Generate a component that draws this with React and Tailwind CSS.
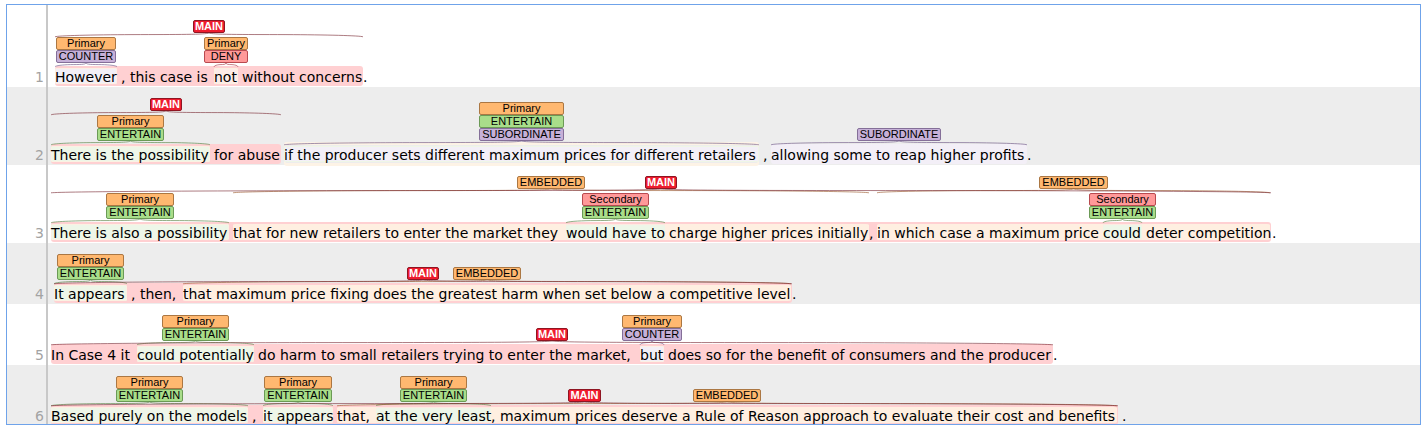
import React from "react";
import clsx from "clsx";

const TAGS = {
  MAIN: "bg-[#ee1c2e] border-[#8f1522] px-px text-white font-bold",
  Primary: "bg-[#ffb870] border-[#ab7743] px-[2px]",
  Secondary: "bg-[#ff9999] border-[#b84a50] px-[2px]",
  DENY: "bg-[#ff9999] border-[#b84a50] px-[2px]",
  ENTERTAIN: "bg-[#a9dd8a] border-[#6b9a56] px-[2px]",
  COUNTER: "bg-[#c6b0d8] border-[#846f98] px-[2px]",
  SUBORDINATE: "bg-[#c6b0d8] border-[#846f98] px-[2px]",
  EMBEDDED: "bg-[#ffb870] border-[#ab7743] px-[2px]",
};

const HIGHLIGHTS = {
  main: "bg-[#ffd0d2]",
  embedded: "bg-[#ffefe1] bg-clip-padding",
  entertain: "bg-[#eef6e8] bg-clip-padding shadow-[inset_0_0_0_1px_#fbf1e2]",
  secondary: "bg-[#eef6e8] bg-clip-padding shadow-[inset_0_1px_0_0_#fdebe2,inset_0_-1px_0_0_#fdebe2]",
  counter: "bg-[#f3eff7] bg-clip-padding shadow-[inset_0_0_0_1px_#fcf0e4]",
  deny: "bg-[#fdece8] bg-clip-padding shadow-[inset_0_0_0_1px_#fcf0e0]",
  layered: "bg-[#f3eff7] shadow-[inset_0_0_0_1px_#eff6e6,0_2px_0_0_#fdf3e6,0_-2px_0_0_#fdf3e6] bg-clip-padding",
  subordinate: "bg-[#f3eff7]",
};

const STROKES = {
  main: "text-[#7d2f38]",
  embedded: "text-[#9a5a2c]",
  entertain: "text-[#55803f]",
  secondary: "text-[#55803f]",
  counter: "text-[#6d5585]",
  deny: "text-[#a93a44]",
  layered: "text-[#6d5585]",
  subordinate: "text-[#6d5585]",
};

function Brace({ kind }) {
  return (
    <svg
      aria-hidden="true"
      viewBox="0 0 100 4"
      preserveAspectRatio="none"
      className={clsx("block h-1 w-full overflow-visible", STROKES[kind])}
    >
      <path
        d="M0 3.8 C1 2.6 12 1.8 25 1.6 C40 1.5 49 1.6 50 0 C51 1.6 60 1.5 75 1.6 C88 1.8 99 2.6 100 3.8"
        fill="none"
        stroke="currentColor"
        strokeWidth="0.7"
        strokeOpacity="0.9"
        vectorEffect="non-scaling-stroke"
      />
    </svg>
  );
}

function Mark({ kind, tags, raised, className, children }) {
  return (
    <span
      className={clsx(
        "relative flex h-5 shrink-0 rounded-[3px] border-y-2 border-transparent",
        HIGHLIGHTS[kind],
        className
      )}
    >
      {children}
      <span
        className={clsx(
          "absolute inset-x-0 flex flex-col items-center",
          raised ? "bottom-[47px]" : "bottom-[17px]"
        )}
      >
        <span className="flex flex-col">
          {tags.map((tag) => (
            <span
              key={tag}
              className={clsx(
                "h-[13px] rounded-[2px] border text-center font-['Liberation_Sans',Arial,sans-serif] text-[11px] leading-[11px] whitespace-nowrap",
                TAGS[tag]
              )}
            >
              {tag}
            </span>
          ))}
        </span>
        <Brace kind={kind} />
      </span>
    </span>
  );
}

function Words({ className, children }) {
  return <span className={clsx("shrink-0", className)}>{children}</span>;
}

function Sentence({ number, className, children }) {
  return (
    <li className="flex bg-white last:-mb-[2px] even:bg-[#ededed]">
      <span className="flex w-[41px] shrink-0 items-end justify-end border-r-2 border-[#c8c8c8] pr-[2px] leading-5 text-[#a3a3a3]">
        {number}
      </span>
      <p className={clsx("flex pb-px leading-[18px] whitespace-nowrap", className)}>{children}</p>
    </li>
  );
}

const STANCE = ["Primary", "ENTERTAIN"];
const HEDGE = ["Secondary", "ENTERTAIN"];

export default function App() {
  return (
    <main className="bg-white px-[6px] py-1 font-['DejaVu_Sans',Verdana,sans-serif] text-[14px] text-black">
      <ol className="overflow-hidden border border-[#6fa3ea]">
        <Sentence number={1} className="pt-[61px] pl-[7px]">
          <Mark kind="main" tags={["MAIN"]} raised className="w-[308px]">
            <Mark kind="counter" tags={["Primary", "COUNTER"]} className="-mt-[2px] w-[62px]">However</Mark>
            <Words className="w-[97px] pl-1">, this case is</Words>
            <Mark kind="deny" tags={["Primary", "DENY"]} className="-mt-[2px] w-6">not</Mark>
            <Words className="pl-1">without concerns</Words>
          </Mark>
          <Words className="pt-[2px]">.</Words>
        </Sentence>

        <Sentence number={2} className="pt-[57px] pl-[3px]">
          <Mark kind="main" tags={["MAIN"]} raised className="w-[230px]">
            <Mark kind="entertain" tags={STANCE} className="-mt-[2px] w-[159px]">There is the possibility</Mark>
            <Words className="pl-1">for abuse</Words>
          </Mark>
          <Mark kind="layered" tags={["Primary", "ENTERTAIN", "SUBORDINATE"]} className="ml-[3px] w-[475px]">
            if the producer sets different maximum prices for different retailers
          </Mark>
          <Words className="w-3 pt-[2px] pl-1">,</Words>
          <Mark kind="subordinate" tags={["SUBORDINATE"]} className="w-[256px]">
            allowing some to reap higher profits
          </Mark>
          <Words className="pt-[2px]">.</Words>
        </Sentence>

        <Sentence number={3} className="pt-[57px] pl-[3px]">
          <Mark kind="main" tags={["MAIN"]} raised className="w-[1220px]">
            <Mark kind="entertain" tags={STANCE} className="-mt-[2px] w-[178px]">There is also a possibility</Mark>
            <Mark kind="embedded" tags={["EMBEDDED"]} raised className="-mt-[2px] ml-1 w-[636px]">
              <Words className="w-[333px]">that for new retailers to enter the market they</Words>
              <Mark kind="secondary" tags={HEDGE} className="-mt-[2px] w-[99px]">would have to</Mark>
              <Words className="pl-1">charge higher prices initially</Words>
            </Mark>
            <Words className="w-2">,</Words>
            <Mark kind="embedded" tags={["EMBEDDED"]} raised className="-mt-[2px] w-[393px]">
              <Words className="w-[226px]">in which case a maximum price</Words>
              <Mark kind="secondary" tags={HEDGE} className="-mt-[2px] w-[39px]">could</Mark>
              <Words className="pl-1">deter competition</Words>
            </Mark>
          </Mark>
          <Words className="pt-[2px] pl-px">.</Words>
        </Sentence>

        <Sentence number={4} className="pt-10 pl-[6px]">
          <Mark kind="main" tags={["MAIN"]} className="w-[738px]">
            <Mark kind="entertain" tags={STANCE} className="-mt-[2px] w-[73px]">It appears</Mark>
            <Words className="w-14 pl-1">, then,</Words>
            <Mark kind="embedded" tags={["EMBEDDED"]} className="-mt-[2px] w-[608px]">
              that maximum price fixing does the greatest harm when set below a competitive level
            </Mark>
          </Mark>
          <Words className="pt-[2px]">.</Words>
        </Sentence>

        <Sentence number={5} className="pt-10 pl-[3px]">
          <Mark kind="main" tags={["MAIN"]} className="w-[1002px]">
            <Words className="w-[86px]">In Case 4 it</Words>
            <Mark kind="entertain" tags={STANCE} className="-mt-[2px] w-[117px]">could potentially</Mark>
            <Words className="w-[386px] pl-1">do harm to small retailers trying to enter the market,</Words>
            <Mark kind="counter" tags={["Primary", "COUNTER"]} className="-mt-[2px] w-6">but</Mark>
            <Words className="pl-1">does so for the benefit of consumers and the producer</Words>
          </Mark>
          <Words className="pt-[2px]">.</Words>
        </Sentence>

        <Sentence number={6} className="pt-10 pl-[3px]">
          <Mark kind="main" tags={["MAIN"]} className="w-[1067px]">
            <Mark kind="entertain" tags={STANCE} className="-mt-[2px] w-[197px]">Based purely on the models</Mark>
            <Words className="w-[15px] pl-1">,</Words>
            <Mark kind="entertain" tags={STANCE} className="-mt-[2px] w-[70px]">it appears</Mark>
            <Mark kind="embedded" tags={["EMBEDDED"]} className="-mt-[2px] ml-1 w-[780px]">
              <Words className="w-[39px]">that,</Words>
              <Mark kind="secondary" tags={STANCE} className="-mt-[2px] w-[115px]">at the very least</Mark>
              <Words>, maximum prices deserve a Rule of Reason approach to evaluate their cost and benefits</Words>
            </Mark>
          </Mark>
          <Words className="pt-[2px] pl-1">.</Words>
        </Sentence>
      </ol>
    </main>
  );
}
